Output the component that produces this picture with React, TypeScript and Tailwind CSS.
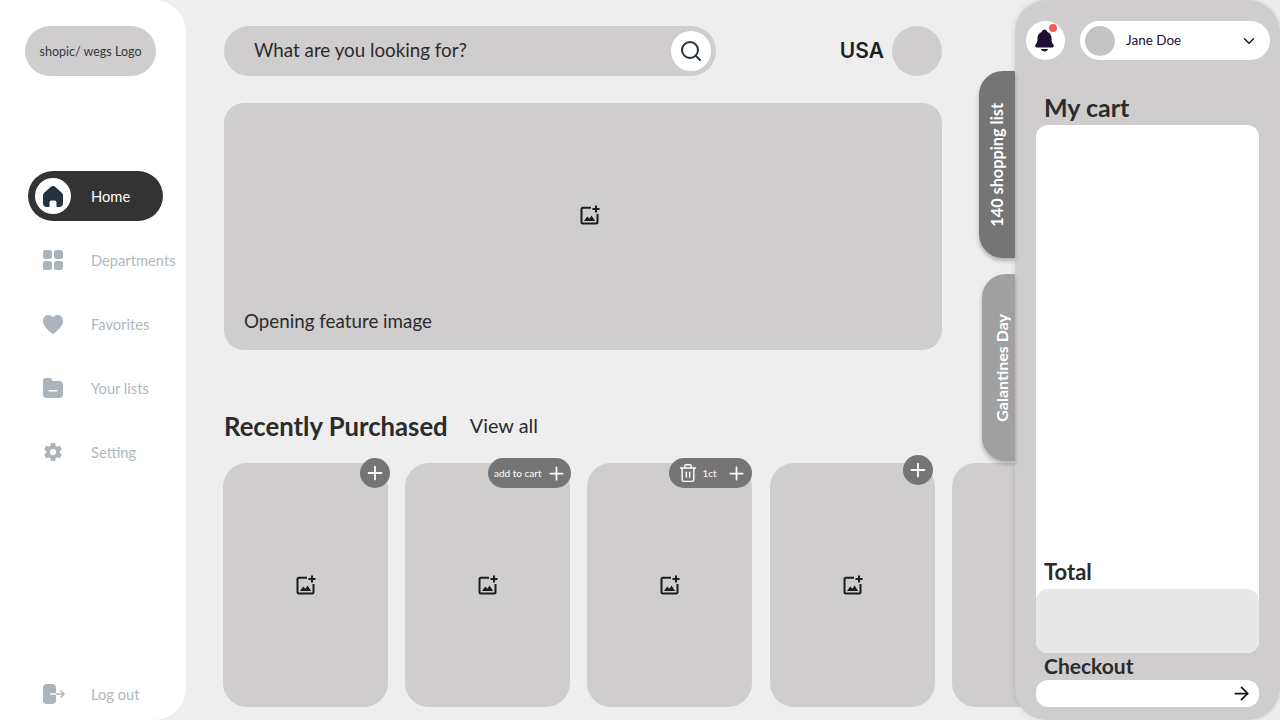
import { ArrowRight, ChevronDown, Plus, Search, Trash2 } from 'lucide-react';
import { IoNotifications, IoSettingsSharp } from 'react-icons/io5';
import type { ReactNode } from 'react';

function ImageAdd() {
  return (
    <svg width="20" height="20" viewBox="0 0 20 20" fill="none" className="shrink-0">
      <path d="M11 2.800H3a1.500 1.500 0 0 0-1.500 1.500V17A1.500 1.500 0 0 0 3 18.500h13a1.500 1.500 0 0 0 1.500-1.500V9" stroke="#1c1c1c" strokeWidth="2" />
      <path d="M4 16l3.200-4.600 2.300 2.300 2-3.100 3.600 5.400z" fill="#1c1c1c" />
      <path d="M16 0.500v7M12.500 4h7" stroke="#1c1c1c" strokeWidth="2" />
    </svg>
  );
}

function HomeIcon() {
  return (
    <svg width="20" height="21" viewBox="0 0 20 21" fill="#24323b">
      <path d="M8 .8a3 3 0 0 1 4 0l6.800 6A3.500 3.500 0 0 1 20 9.400V17a4 4 0 0 1-4 4h-2.500v-4.500a2 2 0 0 0-2-2h-3a2 2 0 0 0-2 2V21H4a4 4 0 0 1-4-4V9.400a3.500 3.500 0 0 1 1.200-2.600z" />
    </svg>
  );
}

function GridIcon() {
  return (
    <svg width="20" height="20" viewBox="0 0 20 20" fill="#aab4ba">
      <rect width="9" height="9" rx="2.500" />
      <rect x="11" width="9" height="9" rx="2.500" />
      <rect y="11" width="9" height="9" rx="2.500" />
      <rect x="11" y="11" width="9" height="9" rx="2.500" />
    </svg>
  );
}

function HeartIcon() {
  return (
    <svg width="20" height="19" viewBox="0 0 20 19" fill="#aab4ba">
      <path d="M5.500 0C7.500 0 9 1 10 2.500 11 1 12.500 0 14.500 0 17.700 0 20 2.500 20 5.800c0 5.200-5.500 10-9 12.700a1.700 1.700 0 0 1-2 0C5.500 15.800 0 11 0 5.800 0 2.500 2.300 0 5.500 0z" />
    </svg>
  );
}

function FolderIcon() {
  return (
    <svg width="20" height="20" viewBox="0 0 20 20">
      <path d="M3 0h3.500c1 0 1.600.5 2.100 1.200L9.800 3H16a4 4 0 0 1 4 4v9a4 4 0 0 1-4 4H4a4 4 0 0 1-4-4V3a3 3 0 0 1 3-3z" fill="#aab4ba" />
      <rect x="5.500" y="12" width="9" height="1.500" fill="#fff" />
    </svg>
  );
}

function LogoutIcon() {
  return (
    <svg width="22" height="20" viewBox="0 0 22 20" fill="none" className="shrink-0">
      <rect width="13" height="20" rx="4" fill="#aab4ba" />
      <path d="M13 10h8M17.500 6.500 21 10l-3.500 3.500" stroke="#aab4ba" strokeWidth="1.500" />
      <path d="M7 10h6" stroke="#fff" strokeWidth="1.500" />
    </svg>
  );
}

function NavItem({ icon, label, height = 'h-[64px]' }: { icon: ReactNode; label: string; height?: string }) {
  return (
    <div className={`flex items-center pl-[43px] ${height}`}>
      <span className="w-[20px] flex">{icon}</span>
      <span className="ml-[28px] text-[14.700px] text-[#b0b8bd]">{label}</span>
    </div>
  );
}

function Badge({ className, children }: { className: string; children: ReactNode }) {
  return (
    <div className={`absolute h-[30px] flex items-center rounded-full bg-[#757575] text-white ${className}`}>
      {children}
    </div>
  );
}

function Card({ children }: { children?: ReactNode }) {
  return (
    <div className="relative w-[165px] h-[244px] shrink-0 rounded-[24px] bg-[#cfcdce] flex items-center justify-center">
      <span className="ml-[1px]"><ImageAdd /></span>
      {children}
    </div>
  );
}

export default function App() {
  return (
    <div className="relative w-[1280px] h-[720px] overflow-hidden flex bg-[#eeeeee] font-['Lato','Noto_Sans',sans-serif] text-[#2b2b2b]">
      {/* sidebar */}
      <aside className="w-[186px] h-full shrink-0 flex flex-col bg-white rounded-r-[32px] pt-[26px]">
        <div className="ml-[25px] w-[131px] h-[50px] pt-[2px] rounded-full bg-[#cfcdce] flex items-center justify-center text-[12.500px] text-[#2f3a40]">
          shopic/ wegs Logo
        </div>
        <div className="ml-[28px] mt-[95px] mb-[7px] w-[135px] h-[50px] rounded-full bg-[#333333] flex items-center pl-[7px]">
          <span className="w-[36px] h-[36px] rounded-full bg-white flex items-center justify-center">
            <HomeIcon />
          </span>
          <span className="ml-[20px] text-[14.700px] text-white">Home</span>
        </div>
        <NavItem icon={<GridIcon />} label="Departments" />
        <NavItem icon={<HeartIcon />} label="Favorites" />
        <NavItem icon={<FolderIcon />} label="Your lists" />
        <NavItem icon={<IoSettingsSharp size={22} color="#aab4ba" />} label="Setting" />
        <div className="mt-auto">
          <NavItem icon={<LogoutIcon />} label="Log out" height="h-[52px]" />
        </div>
      </aside>

      {/* main */}
      <main className="flex-1 min-w-0 overflow-hidden pl-[37px] pt-[26px]">
        <div className="flex items-center w-[719px] pl-[1px]">
          <div className="w-[492px] h-[50px] rounded-full bg-[#cfcdce] flex items-center justify-between pl-[30px] pr-[5px]">
            <span className="text-[18.800px] leading-[24px] pb-[2px] text-[#2b2b2b]">What are you looking for?</span>
            <span className="w-[40px] h-[40px] rounded-full bg-white flex items-center justify-center">
              <Search size={24} strokeWidth={2} color="#24323b" />
            </span>
          </div>
          <span className="ml-auto mr-[8px] text-[21px] font-semibold font-['Inter',sans-serif] text-[#1f1f1f]">USA</span>
          <span className="w-[50px] h-[50px] rounded-full bg-[#cfcdce]" />
        </div>

        <div className="relative ml-[1px] mt-[27px] w-[718px] h-[247px] rounded-[20px] bg-[#cfcdce]">
          <div className="pt-[102px] flex justify-center">
            <span className="ml-[14px]"><ImageAdd /></span>
          </div>
          <span className="absolute left-[20px] bottom-[15px] text-[18.800px]">Opening feature image</span>
        </div>

        <div className="flex items-center ml-[1px] mt-[59px] h-[34px]">
          <h2 className="text-[25.700px] leading-[34px] font-bold">Recently Purchased</h2>
          <span className="ml-[22px] text-[19.900px]">View all</span>
        </div>

        <div className="flex gap-[17.400px] mt-[20px] -ml-[0.400px]">
          <Card>
            <Badge className="top-[-5px] right-[-2px] w-[30px] justify-center">
              <Plus size={22} strokeWidth={2} />
            </Badge>
          </Card>
          <Card>
            <Badge className="top-[-5px] right-[-1px] w-[83px] pl-[6px] gap-[4px]">
              <span className="text-[10px] whitespace-nowrap">add to cart</span>
              <Plus size={21} strokeWidth={2} />
            </Badge>
          </Card>
          <Card>
            <Badge className="top-[-5px] right-[0px] w-[83px] pl-[9px]">
              <Trash2 size={20} strokeWidth={1.700} />
              <span className="ml-[4px] text-[10px]">1ct</span>
              <span className="ml-[9px]"><Plus size={21} strokeWidth={2} /></span>
            </Badge>
          </Card>
          <Card>
            <Badge className="top-[-8px] right-[2px] w-[30px] justify-center">
              <Plus size={22} strokeWidth={2} />
            </Badge>
          </Card>
          <Card />
        </div>
      </main>

      {/* cart panel, sits over the page */}
      <section className="absolute top-0 right-0 w-[265px] h-[720px] rounded-[32px] bg-[#cfcdce] shadow-[0_0_6px_rgba(0,0,0,0.12)] pt-[21px]">
        <div className="absolute left-[-36px] top-[71px] w-[36px] h-[187px] rounded-l-[24px] bg-[#757575] shadow-[0_3px_4px_rgba(0,0,0,0.25)] flex items-center justify-center">
          <span className="[writing-mode:vertical-rl] rotate-180 text-[16.300px] font-bold text-white whitespace-nowrap">140 shopping list</span>
        </div>
        <div className="absolute left-[-33px] top-[274px] w-[33px] h-[187px] rounded-l-[24px] bg-[#a0a0a0] shadow-[0_3px_4px_rgba(0,0,0,0.25)] flex items-center justify-center pl-[6px]">
          <span className="[writing-mode:vertical-rl] rotate-180 text-[16px] font-bold text-white whitespace-nowrap">Galantines Day</span>
        </div>

        <div className="flex items-center pl-[11px]">
          <span className="relative w-[39px] h-[39px] rounded-full bg-white flex items-center justify-center pr-[3px]">
            <IoNotifications size={25} color="#1f0f33" />
            <span className="absolute top-[3px] right-[8px] w-[8px] h-[8px] rounded-full bg-[#f25a5a]" />
          </span>
          <div className="ml-[15px] w-[190px] h-[39px] rounded-full bg-white flex items-center pl-[5px] pr-[12px]">
            <span className="w-[30px] h-[30px] rounded-full bg-[#c4c4c4]" />
            <span className="ml-[11px] text-[13.500px] leading-[18px] pb-[2px] text-[#1f0f33]">Jane Doe</span>
            <ChevronDown size={18} strokeWidth={2} className="ml-auto text-[#1c1c1c]" />
          </div>
        </div>

        <h2 className="ml-[29px] mt-[31px] leading-[32px] text-[25px] font-bold">My cart</h2>

        <div className="mx-[21px] mt-[2px] h-[528px] rounded-[12px] bg-white flex flex-col justify-end">
          <span className="ml-[8px] mb-[2px] text-[22px] leading-[30px] font-bold">Total</span>
          <div className="h-[64px] rounded-[12px] bg-[#e8e8e8]" />
        </div>

        <div className="ml-[29px] text-[21px] leading-[26px] font-bold">Checkout</div>
        <div className="mx-[21px] mt-[1px] h-[27px] rounded-[12px] bg-white flex items-center justify-end pr-[7px]">
          <ArrowRight size={21} strokeWidth={2} className="text-[#111111]" />
        </div>
      </section>
    </div>
  );
}
